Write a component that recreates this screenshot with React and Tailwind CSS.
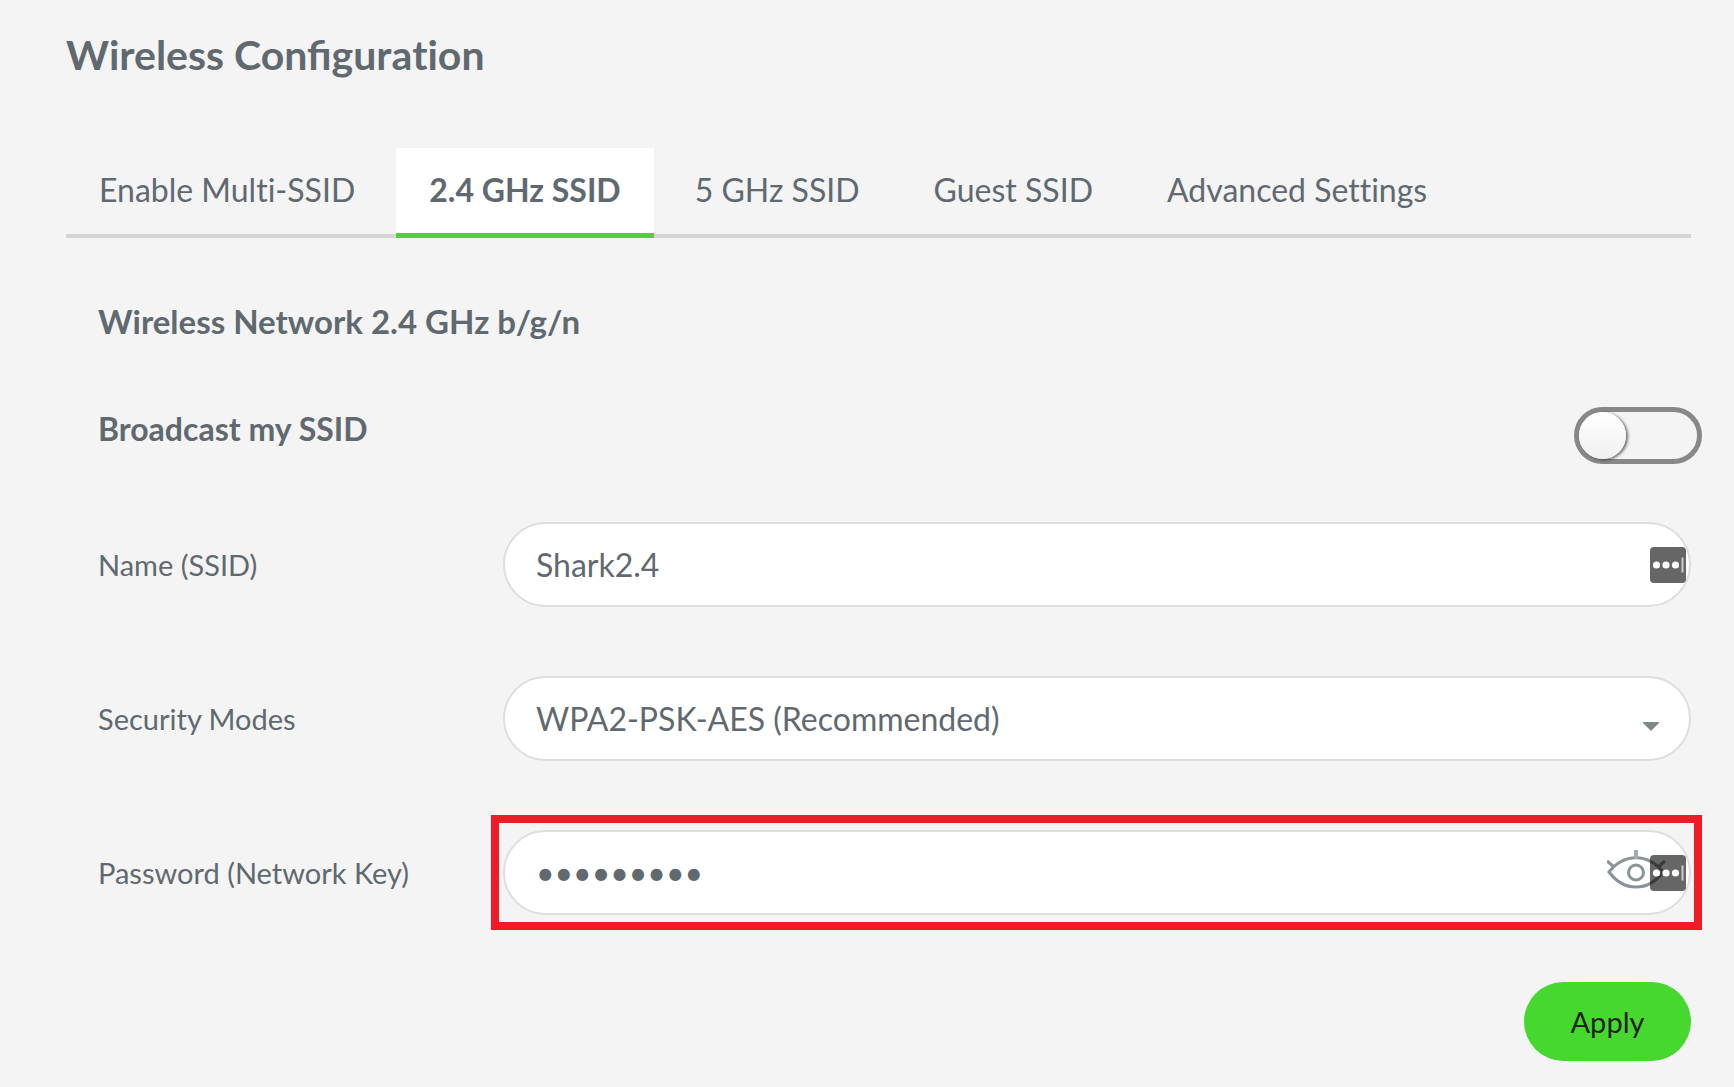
import React, { useState } from 'react';

const tabs = ['Enable Multi-SSID', '2.4 GHz SSID', '5 GHz SSID', 'Guest SSID', 'Advanced Settings'];

const fieldClass =
  'block w-full h-[85px] rounded-full border-2 border-[#dedede] bg-white pl-[31px] pr-28 text-[32px] text-[#5f696f] outline-none';

const FieldRow = ({ id, label, children }) => (
  <div className="grid grid-cols-[405px_1fr] items-center">
    <label htmlFor={id} className="text-[29px] leading-9">
      {label}
    </label>
    <div className="relative">{children}</div>
  </div>
);

// Small password manager badge at the right end of a text box
const ManagerBadge = () => (
  <svg
    className="pointer-events-none absolute right-[5px] top-1/2 -translate-y-1/2"
    width="36"
    height="36"
    viewBox="0 0 36 36"
    aria-hidden="true"
  >
    <rect width="36" height="36" rx="4" fill="#000" fillOpacity="0.6" />
    <circle cx="6.5" cy="18" r="3.6" fill="#fff" />
    <circle cx="16" cy="18" r="3.6" fill="#fff" />
    <circle cx="25.5" cy="18" r="3.6" fill="#fff" />
    <rect x="31.5" y="10.5" width="2" height="15" fill="#ccc" />
  </svg>
);

const EyeIcon = () => (
  <svg width="60" height="40" viewBox="0 0 60 40" fill="none" stroke="#8a9398" strokeWidth="3">
    <path d="M2 22 C17 3 41 3 56 22 C41 42 17 42 2 22 Z" />
    <circle cx="29" cy="22.5" r="7.5" />
    <path d="M29 0 V9" stroke="#a3abaf" strokeWidth="4" />
    <path d="M0 11 L7 17 M58 11 L51 17" />
  </svg>
);

const App = () => {
  const [activeTab, setActiveTab] = useState('2.4 GHz SSID');
  const [broadcast, setBroadcast] = useState(false);
  const [showPassword, setShowPassword] = useState(false);
  const [ssid, setSsid] = useState('Shark2.4');
  const [password, setPassword] = useState('shark1234');

  return (
    <div className="min-h-screen bg-[#f4f4f4] pl-[66px] pr-[43px] pt-[31px] pb-[26px] font-['Lato',sans-serif] text-[#5f696f]">
      <h1 className="text-[41px] leading-[48px] font-bold">
        Wireless Configura<span className="[font-variant-ligatures:none]">tion</span>
      </h1>

      <nav className="mt-[69px] flex gap-2 bg-[linear-gradient(#d5d5d5,#d5d5d5)] bg-[length:100%_4px] bg-bottom bg-no-repeat [font-variant-ligatures:none]">
        {tabs.map((tab) => (
          <button
            key={tab}
            type="button"
            onClick={() => setActiveTab(tab)}
            className={`h-[90px] border-b-[5px] px-[33px] pb-0.5 text-[32px] ${
              activeTab === tab ? 'border-[#46d82f] bg-white font-bold' : 'border-transparent'
            }`}
          >
            {tab}
          </button>
        ))}
      </nav>

      <form className="pl-8" onSubmit={(e) => e.preventDefault()}>
        <h2 className="mt-[62px] text-[33px] leading-[42px] font-bold">Wireless Network 2.4 GHz b/g/n</h2>

        <div className="mt-[65px] -mr-[11px] flex items-start justify-between">
          <label htmlFor="broadcast" className="text-[32px] leading-[44px] font-bold">
            Broadcast my SSID
          </label>
          <span className="relative block h-[57px] w-32">
            <input
              id="broadcast"
              type="checkbox"
              checked={broadcast}
              onChange={(e) => setBroadcast(e.target.checked)}
              className="peer block h-full w-full appearance-none rounded-full border-[5px] border-[#888] checked:border-[#46d82f]"
            />
            <span className="pointer-events-none absolute left-[5px] top-[5px] h-[47px] w-[47px] rounded-full bg-linear-to-b from-white to-[#f0f0f0] shadow-[2px_1px_3px_rgba(0,0,0,0.55)] peer-checked:left-[76px]" />
          </span>
        </div>

        <div className="mt-[58px] flex flex-col gap-[69px]">
          <FieldRow id="ssid" label="Name (SSID)">
            <input
              id="ssid"
              type="text"
              value={ssid}
              onChange={(e) => setSsid(e.target.value)}
              className={fieldClass}
            />
            <ManagerBadge />
          </FieldRow>

          <FieldRow id="security" label="Security Modes">
            <select id="security" className={`${fieldClass} appearance-none`}>
              <option>WPA2-PSK-AES (Recommended)</option>
            </select>
            <svg
              className="pointer-events-none absolute right-8 top-[46px]"
              width="16"
              height="9"
              viewBox="0 0 16 9"
              aria-hidden="true"
            >
              <path d="M0 0 H16 V1 L8 9 L0 1 Z" fill="#7f888d" />
            </svg>
          </FieldRow>

          <FieldRow id="password" label="Password (Network Key)">
            <input
              id="password"
              type={showPassword ? 'text' : 'password'}
              value={password}
              onChange={(e) => setPassword(e.target.value)}
              className={fieldClass}
            />
            <button
              type="button"
              aria-label="Show password"
              onClick={() => setShowPassword(!showPassword)}
              className="absolute right-6 top-5"
            >
              <EyeIcon />
            </button>
            <ManagerBadge />
            <div className="pointer-events-none absolute -left-3 -right-[11px] -inset-y-[15px] border-8 border-[#ee1c25]" />
          </FieldRow>
        </div>

        <div className="mt-[67px] flex justify-end">
          <button type="submit" className="h-[79px] w-[167px] rounded-full bg-[#46d82f] text-[29px] text-[#222]">
            Apply
          </button>
        </div>
      </form>
    </div>
  );
};

export default App;
